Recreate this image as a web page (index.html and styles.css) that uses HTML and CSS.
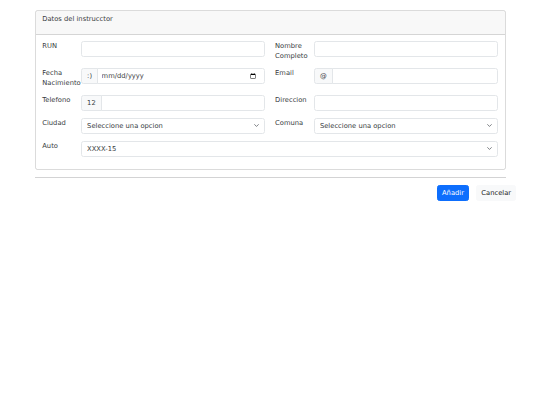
FILE: index.html
```html
<!DOCTYPE html>
<html lang="es">
<head>
<meta charset="utf-8">
<title>Datos del instructor</title>
<link rel="stylesheet" href="styles.css">
</head>
<body>
<div class="container">
  <div class="card">
    <div class="card-header"><p>Datos del instrucctor</p></div>
    <div class="card-body">
      <div class="form-row">
        <label class="lbl">RUN</label>
        <input class="form-control" type="text">
        <label class="lbl">Nombre Completo</label>
        <input class="form-control" type="text">
      </div>
      <div class="form-row">
        <label class="lbl">Fecha Nacimiento</label>
        <div class="input-group">
          <span class="group-text">:)</span>
          <input class="form-control date" type="date">
        </div>
        <label class="lbl">Email</label>
        <div class="input-group">
          <span class="group-text">@</span>
          <input class="form-control" type="email">
        </div>
      </div>
      <div class="form-row">
        <label class="lbl">Telefono</label>
        <div class="input-group">
          <span class="group-text">12</span>
          <input class="form-control" type="text">
        </div>
        <label class="lbl">Direccion</label>
        <input class="form-control" type="text">
      </div>
      <div class="form-row">
        <label class="lbl">Ciudad</label>
        <div class="select-wrap">
          <select class="form-select"><option>Seleccione una opcion</option></select>
          <svg class="chev" viewBox="0 0 16 16"><path d="m2 5 6 6 6-6" fill="none" stroke="#343a40" stroke-width="2" stroke-linecap="round" stroke-linejoin="round"/></svg>
        </div>
        <label class="lbl">Comuna</label>
        <div class="select-wrap">
          <select class="form-select"><option>Seleccione una opcion</option></select>
          <svg class="chev" viewBox="0 0 16 16"><path d="m2 5 6 6 6-6" fill="none" stroke="#343a40" stroke-width="2" stroke-linecap="round" stroke-linejoin="round"/></svg>
        </div>
      </div>
      <div class="form-row">
        <label class="lbl">Auto</label>
        <div class="select-wrap wide">
          <select class="form-select"><option>XXXX-15</option></select>
          <svg class="chev" viewBox="0 0 16 16"><path d="m2 5 6 6 6-6" fill="none" stroke="#343a40" stroke-width="2" stroke-linecap="round" stroke-linejoin="round"/></svg>
        </div>
      </div>
    </div>
  </div>
  <hr class="sep">
  <div class="actions">
    <button class="btn btn-primary" type="button">Añadir</button>
    <button class="btn btn-light" type="button">Cancelar</button>
  </div>
</div>
</body>
</html>
```
FILE: styles.css
```css
html {
  font-size: 6.75px;
}
body {
  margin: 0;
  font-family: "DejaVu Sans", sans-serif;
  font-size: 1rem;
  line-height: 1.5;
  color: #383c41;
  background: #fff;
}
.container {
  width: 471px;
  margin: 10px auto 0;
}
.card {
  border: 1px solid rgba(0, 0, 0, 0.14);
  border-radius: 2.5px;
  overflow: hidden;
}
.card-header {
  padding: 3px 6.75px;
  height: 16.5px;
  background: rgba(33, 37, 41, 0.03);
  border-bottom: 1px solid rgba(0, 0, 0, 0.14);
}
.card-header p {
  margin: 0;
}
.card-body {
  padding: 6.5px 6.75px 6px;
}
.form-row {
  display: grid;
  grid-template-columns: 28.7px 1fr 28.7px 1fr;
  column-gap: 10.125px;
  align-items: start;
  margin-bottom: 6.75px;
}
.lbl {
  display: block;
  min-width: 0;
  overflow: visible;
}
.form-control,
.form-select {
  display: block;
  width: 100%;
  box-sizing: border-box;
  height: 16px;
  padding: 2px 5.06px;
  font-family: inherit;
  font-size: 1rem;
  line-height: 1.5;
  color: #383c41;
  background: #fff;
  border: 1px solid #e3e6e9;
  border-radius: 2.5px;
  margin: 0;
  outline: none;
}
.date {
  padding-left: 3.5px;
  padding-right: 5px;
}
.date::-webkit-datetime-edit-text {
  padding: 0;
  word-spacing: -0.5em;
}
.date::-webkit-datetime-edit-fields-wrapper {
  padding: 0;
}
.date::-webkit-datetime-edit-month-field,
.date::-webkit-datetime-edit-day-field,
.date::-webkit-datetime-edit-year-field {
  padding: 0;
}
.input-group {
  display: flex;
  min-width: 0;
}
.group-text {
  display: flex;
  align-items: center;
  box-sizing: border-box;
  height: 16px;
  padding: 0 5.06px;
  background: #f8f9fa;
  border: 1px solid #e3e6e9;
  border-radius: 2.5px 0 0 2.5px;
  color: #383c41;
  white-space: nowrap;
}
.input-group .form-control {
  flex: 1;
  min-width: 0;
  margin-left: -1px;
  border-radius: 0 2.5px 2.5px 0;
}
.select-wrap {
  position: relative;
  min-width: 0;
}
.select-wrap.wide {
  grid-column: 2 / 5;
}
.form-select {
  -webkit-appearance: none;
  appearance: none;
  padding-right: 16px;
}
.chev {
  position: absolute;
  right: 6px;
  top: 5.5px;
  width: 5px;
  height: 5px;
  pointer-events: none;
}
.sep {
  margin: 6.5px 0;
  border: 0;
  border-top: 1px solid #212529;
  opacity: 0.2;
}
.actions {
  display: flex;
  justify-content: flex-end;
  gap: 7.6px;
  margin-right: -10.5px;
}
.btn {
  box-sizing: border-box;
  height: 16px;
  margin-top: 0.5px;
  padding: 0 3.9px;
  font-family: inherit;
  font-size: 1rem;
  line-height: 1.5;
  border: 1px solid transparent;
  border-radius: 2.5px;
}
.btn-primary {
  background: #0d6efd;
  border-color: #0d6efd;
  color: #fff;
}
.btn-light {
  background: #f8f9fa;
  border-color: #f8f9fa;
  color: #1a1a1a;
}
```
